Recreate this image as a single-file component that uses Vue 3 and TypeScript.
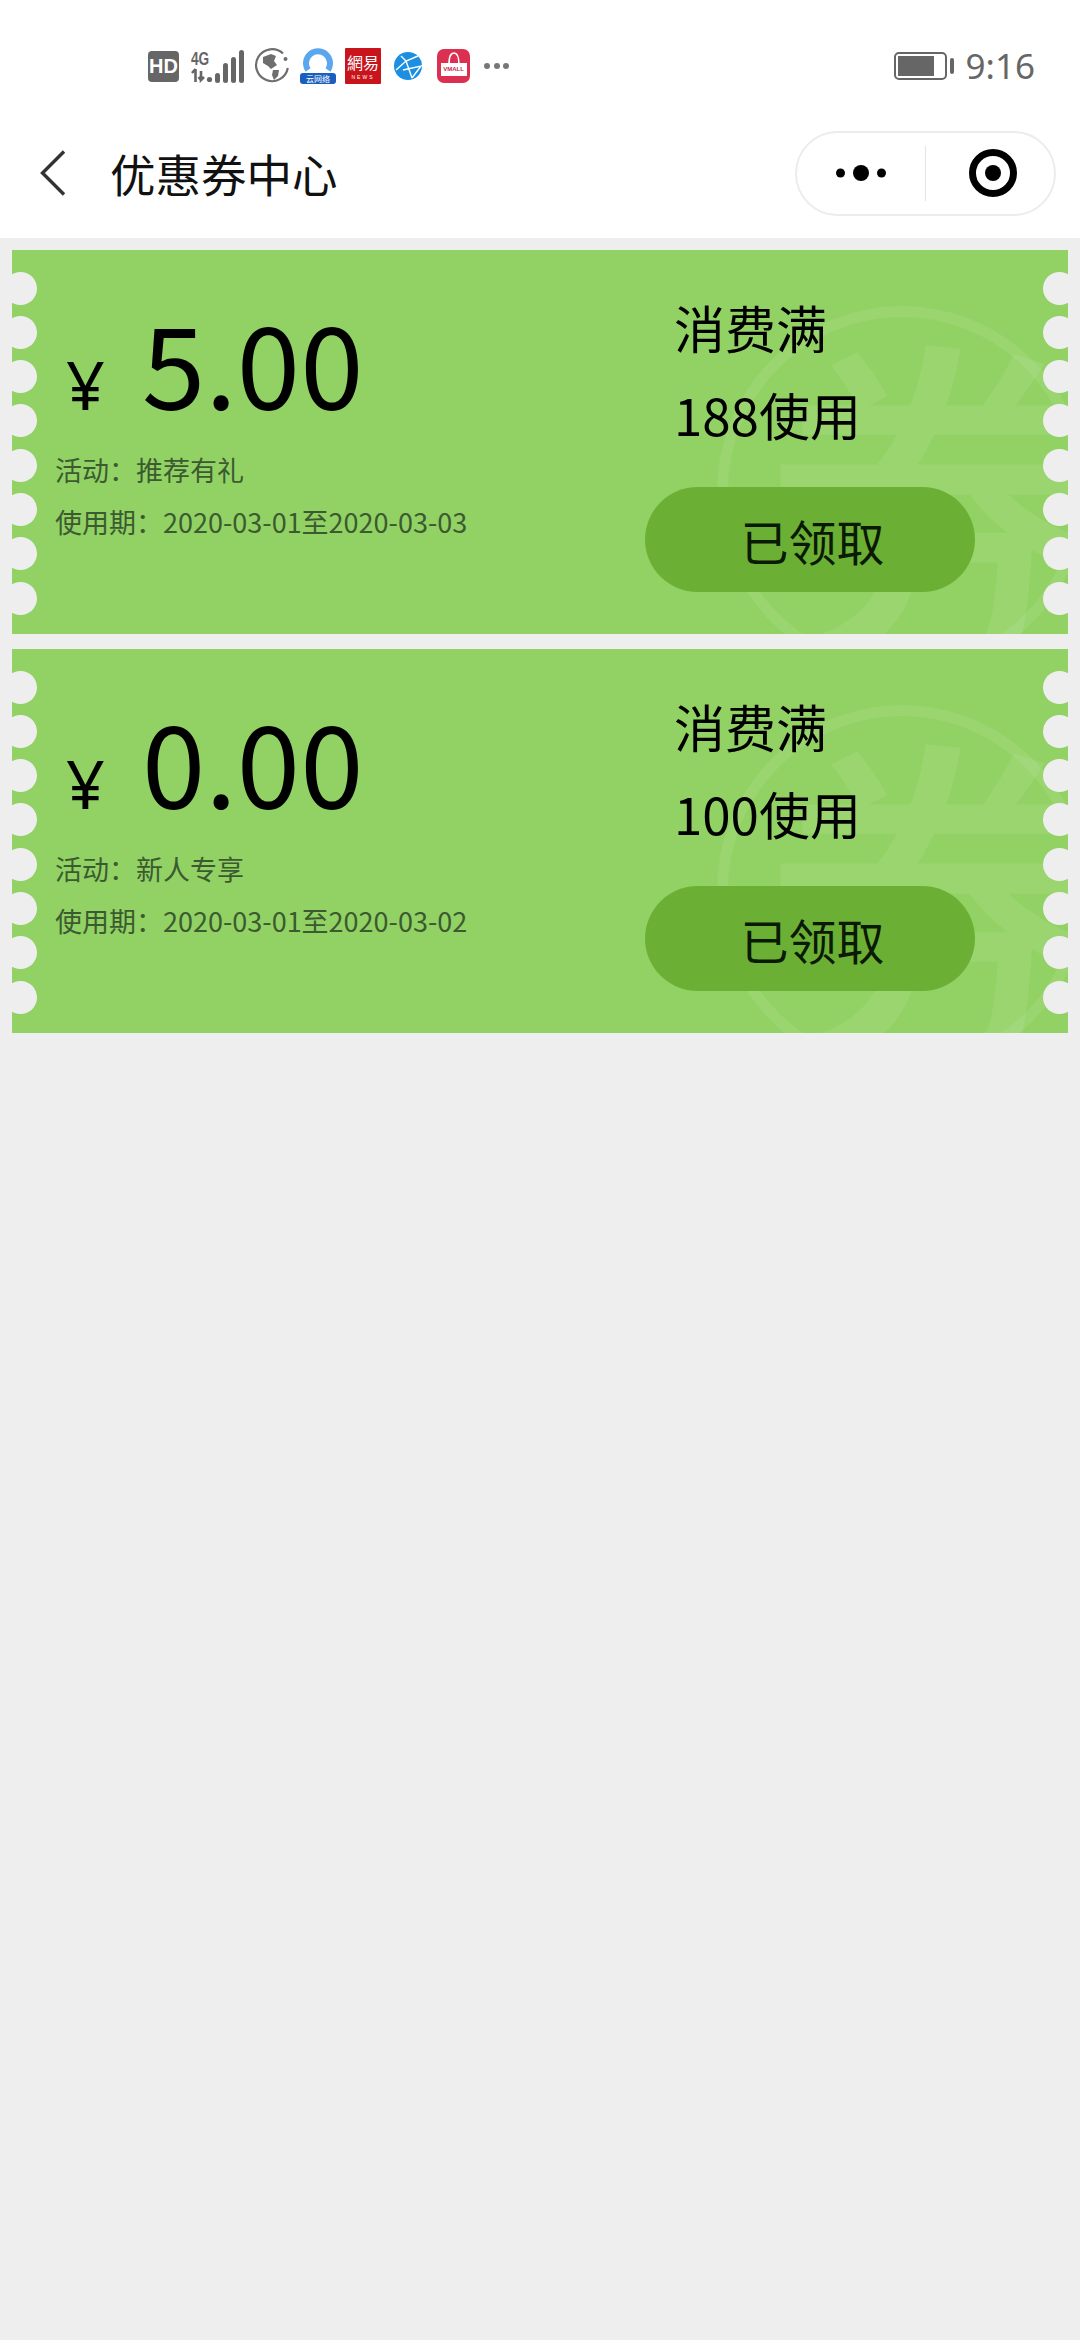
<script setup lang="ts">
interface Coupon {
  amount: string
  threshold: string
  activity: string
  period: string
}
const coupons: Coupon[] = [
  { amount: '5.00', threshold: '188使用', activity: '推荐有礼', period: '2020-03-01至2020-03-03' },
  { amount: '0.00', threshold: '100使用', activity: '新人专享', period: '2020-03-01至2020-03-02' },
]
const notches: number[] = [1, 2, 3, 4, 5, 6, 7, 8]
</script>

<template>
  <div class="page">
    <div class="status">
      <div class="status-left">
        <span class="hd">HD</span>
        <span class="net">
          <span class="net-text">
            <span class="g4">4G</span>
            <svg width="22" height="15" viewBox="0 0 22 15">
              <path d="M4.5 1 L4.5 14 M1 5 L4.5 1 M10 3 L10 12 L13 9 M10 12 L7.5 9" fill="none" stroke="#666" stroke-width="2.6" />
              <circle cx="18.5" cy="11.5" r="2.6" fill="#666" />
            </svg>
          </span>
          <svg class="bars" width="29" height="33" viewBox="0 0 29 33">
            <rect x="0" y="23" width="5" height="10" rx="2.5" fill="#666" />
            <rect x="8" y="13" width="5" height="20" rx="2.5" fill="#666" />
            <rect x="16" y="7" width="5" height="26" rx="2.5" fill="#666" />
            <rect x="24" y="0" width="5" height="33" rx="2.5" fill="#666" />
          </svg>
        </span>
        <svg class="globe" width="36" height="36" viewBox="0 0 36 36">
          <path d="M29 5.5 A16 16 0 1 0 33.8 20" fill="none" stroke="#6e6e6e" stroke-width="2.2" />
          <circle cx="31.5" cy="11" r="2" fill="#6e6e6e" />
          <path d="M9 9 L17 6 L22 8 L20 13 L23 17 L17 21 L14 18 L9 15 Z M19 22 L25 22 L24 28 L20 32 L18 27 Z" fill="#6e6e6e" />
        </svg>
        <span class="cloud">
          <svg width="30" height="27" viewBox="0 0 30 27">
            <path d="M5 22 A12 12 0 1 1 25 22" fill="none" stroke="#5aa7ee" stroke-width="6" />
          </svg>
          <span class="cloud-tag">云网络</span>
        </span>
        <span class="news">
          <span class="news-cn">網易</span>
          <span class="news-en">NEWS</span>
        </span>
        <svg class="planet" width="30" height="30" viewBox="0 0 30 30">
          <circle cx="15" cy="15" r="14" fill="#1d8fe0" />
          <path d="M3 19 L13 10 L25 5 M13 10 L19 27 M8 5 L13 10 M19 27 L28 15 L10 19" fill="none" stroke="#fff" stroke-width="1.4" />
        </svg>
        <span class="vmall">
          <svg width="20" height="13" viewBox="0 0 20 13" class="vmall-handle">
            <path d="M5 13 C5 3 7 1 10 1 C13 1 15 3 15 13" fill="none" stroke="#fff" stroke-width="1.6" />
          </svg>
          <span class="vmall-bag">VMALL</span>
        </span>
        <span class="more"><i></i><i></i><i></i></span>
      </div>
      <div class="status-right">
        <span class="battery"><span class="battery-level"></span></span>
        <span class="battery-nub"></span>
        <span class="time">9:16</span>
      </div>
    </div>

    <header class="nav">
      <svg class="back" width="26" height="46" viewBox="0 0 26 46">
        <path d="M24 1.5 L2.5 23 L24 44.5" fill="none" stroke="#333" stroke-width="3.4" />
      </svg>
      <h1 class="title">优惠券中心</h1>
      <div class="capsule">
        <span class="cap-side">
          <svg width="50" height="18" viewBox="0 0 50 18">
            <circle cx="4.5" cy="9" r="4.5" fill="#000" />
            <circle cx="25" cy="9" r="8" fill="#000" />
            <circle cx="45.5" cy="9" r="4.5" fill="#000" />
          </svg>
        </span>
        <span class="cap-divider"></span>
        <span class="cap-side target">
          <svg width="48" height="48" viewBox="0 0 48 48">
            <circle cx="24" cy="24" r="20.5" fill="none" stroke="#000" stroke-width="7" />
            <circle cx="24" cy="24" r="8" fill="#000" />
          </svg>
        </span>
      </div>
    </header>

    <main class="list">
      <article v-for="c in coupons" :key="c.amount + c.threshold" class="coupon">
        <span class="ring"></span>
        <span class="mark">券</span>
        <div class="notches left">
          <span v-for="n in notches" :key="n" class="notch"></span>
        </div>
        <div class="notches right">
          <span v-for="n in notches" :key="n" class="notch"></span>
        </div>
        <div class="info">
          <div class="amount">
            <span class="yen">¥</span>
            <span class="value">{{ c.amount }}</span>
          </div>
          <p class="line">活动：{{ c.activity }}</p>
          <p class="line">使用期：{{ c.period }}</p>
        </div>
        <div class="action">
          <p class="rule">消费满</p>
          <p class="rule">{{ c.threshold }}</p>
          <button class="btn" type="button">已领取</button>
        </div>
      </article>
    </main>
  </div>
</template>

<style scoped>
.page {
  width: 1080px;
  min-height: 2340px;
  background: #eeeeee;
  font-family: "Noto Sans CJK SC", "Noto Sans", sans-serif;
}
.status {
  height: 84px;
  padding-top: 24px;
  background: #fff;
  display: flex;
  align-items: center;
  justify-content: space-between;
  padding-left: 148px;
  padding-right: 45px;
}
.status-left,
.status-right {
  display: flex;
  align-items: center;
}
.hd {
  width: 31px;
  height: 31px;
  border-radius: 4px;
  background: #666;
  color: #fff;
  font: 700 20px/31px "Liberation Sans", sans-serif;
  text-align: center;
}
.net {
  display: flex;
  align-items: flex-end;
  margin-left: 12px;
  height: 34px;
}
.net-text {
  display: flex;
  flex-direction: column;
  width: 24px;
}
.g4 {
  font: 700 19px/18px "Liberation Sans", sans-serif;
  color: #666;
  transform: scaleX(0.72);
  transform-origin: left center;
}
.bars {
  margin-left: 0;
}
.globe {
  margin-left: 10px;
}
.cloud {
  margin-left: 10px;
  width: 36px;
  height: 36px;
  display: flex;
  flex-direction: column;
  align-items: center;
  position: relative;
}
.cloud-tag {
  position: absolute;
  left: 0;
  bottom: 0;
  width: 36px;
  height: 11px;
  border-radius: 3px;
  background: #1a5fbe;
  color: #fff;
  font-size: 8px;
  line-height: 11px;
  text-align: center;
}
.news {
  margin-left: 9px;
  width: 36px;
  height: 36px;
  background: #c9141b;
  color: #fff;
  display: flex;
  flex-direction: column;
  align-items: center;
  border-radius: 1px;
}
.news-cn {
  font-size: 16px;
  line-height: 21px;
  margin-top: 4px;
  white-space: nowrap;
}
.news-en {
  font: 5px/8px "Liberation Sans", sans-serif;
  letter-spacing: 2px;
}
.planet {
  margin-left: 12px;
}
.vmall {
  margin-left: 14px;
  width: 33px;
  height: 34px;
  border-radius: 7px;
  background: #dc3052;
  display: flex;
  flex-direction: column;
  align-items: center;
  padding-top: 3px;
  box-sizing: border-box;
}
.vmall-handle {
  margin-bottom: -2px;
}
.vmall-bag {
  width: 26px;
  height: 13px;
  background: #fff;
  color: #c8264a;
  font: 700 6px/13px "Liberation Sans", sans-serif;
  text-align: center;
}
.more {
  margin-left: 14px;
  display: flex;
  gap: 3.5px;
}
.more i {
  width: 6px;
  height: 6px;
  border-radius: 50%;
  background: #777;
}
.battery {
  width: 53px;
  height: 28px;
  box-sizing: border-box;
  border: 2px solid #666;
  border-radius: 5px;
  padding: 2px;
  display: block;
}
.battery-level {
  display: block;
  width: 36px;
  height: 20px;
  background: #666;
}
.battery-nub {
  width: 4px;
  height: 16px;
  margin-left: 3px;
  background: #666;
  border-radius: 2px;
}
.time {
  margin-left: 12px;
  font: 400 35px/44px "Noto Sans", sans-serif;
  color: #666;
}
.nav {
  height: 130px;
  background: #fff;
  display: flex;
  align-items: center;
  padding-left: 40px;
  padding-right: 24px;
}
.title {
  margin: 0 0 0 44px;
  font-size: 45.5px;
  font-weight: 400;
  color: #111;
}
.capsule {
  margin-left: auto;
  width: 261px;
  height: 85px;
  box-sizing: border-box;
  border: 2px solid #ececec;
  border-radius: 43px;
  display: flex;
  align-items: center;
}
.cap-side {
  flex: 0 0 128px;
  box-sizing: border-box;
  display: flex;
  justify-content: center;
  align-items: center;
}
.cap-side.target {
  padding-left: 6px;
}
.cap-divider {
  width: 1px;
  height: 55px;
  background: #e4e4e4;
}
.list {
  padding: 12px;
  display: flex;
  flex-direction: column;
  gap: 15px;
}
.coupon {
  position: relative;
  height: 384px;
  background: #92d264;
  overflow: hidden;
  display: flex;
}
.ring {
  position: absolute;
  left: 705px;
  top: 56px;
  width: 370px;
  height: 370px;
  box-sizing: border-box;
  border: 11px solid rgba(255, 255, 255, 0.08);
  border-radius: 50%;
}
.mark {
  position: absolute;
  left: 748px;
  top: 40px;
  font-size: 350px;
  font-weight: 500;
  line-height: 400px;
  color: rgba(255, 255, 255, 0.08);
}
.notches {
  position: absolute;
  top: 21.5px;
  display: flex;
  flex-direction: column;
  gap: 11.3px;
}
.notches.left {
  left: -8px;
}
.notches.right {
  right: -8px;
}
.notch {
  width: 33px;
  height: 33px;
  border-radius: 50%;
  background: #eeeeee;
}
.info {
  position: relative;
  width: 633px;
  padding: 51px 0 0 43px;
  box-sizing: border-box;
}
.amount {
  display: flex;
  align-items: baseline;
  height: 120px;
  margin-bottom: 23px;
  color: #000;
}
.yen {
  font-family: "Noto Sans", sans-serif;
  font-size: 68px;
  line-height: 120px;
  margin-left: 11px;
}
.value {
  margin-left: 37px;
  font-size: 114px;
  line-height: 120px;
}
.line {
  margin: 0;
  font-size: 27px;
  line-height: 52px;
  color: #3b5a30;
  white-space: nowrap;
}
.action {
  position: relative;
  padding-top: 34px;
}
.rule {
  margin: 0 0 0 29px;
  font-size: 51px;
  line-height: 87px;
  color: #000;
  white-space: nowrap;
}
.btn {
  display: block;
  margin-top: 29px;
  width: 330px;
  height: 105px;
  border: 0;
  border-radius: 53px;
  background: #6bb034;
  color: #0a1a05;
  font-family: inherit;
  font-size: 48px;
  padding: 0 0 0 5px;
}
</style>

<style>
html,
body {
  margin: 0;
  background: #eeeeee;
}
</style>
